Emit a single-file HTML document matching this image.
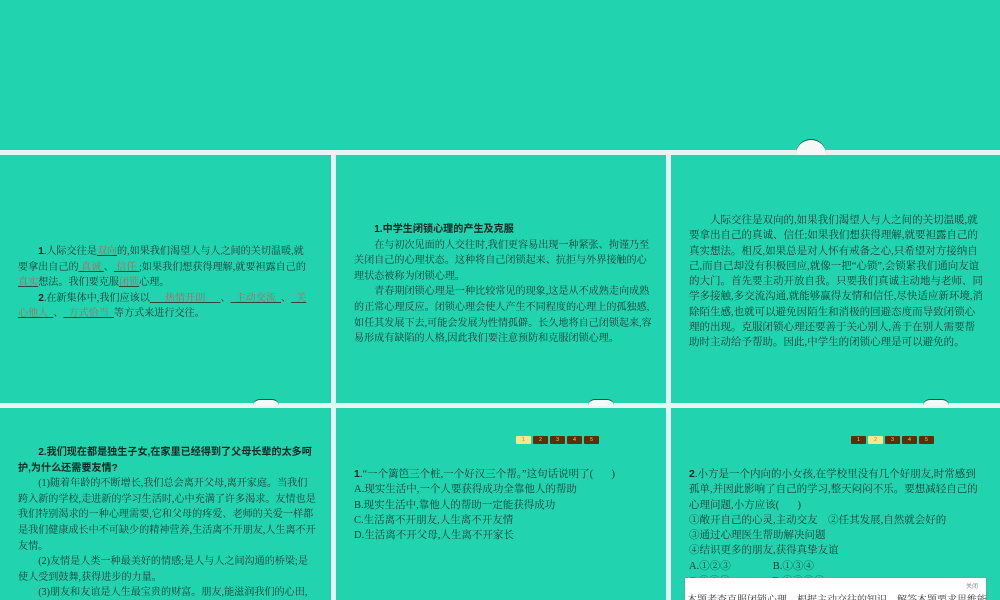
<!DOCTYPE html>
<html><head><meta charset="utf-8"><style>
body{margin:0;width:1000px;height:600px;overflow:hidden;background:#e8f4f1;position:relative;font-family:"Liberation Serif","Noto Serif CJK SC",serif;}
.s{position:absolute;background:#22d3b0;overflow:hidden}
.t{position:absolute;font-size:10.5px;line-height:15.3px;color:#143a30;}
.t.k{font-size:10.1px;line-height:15.6px}
.t p{margin:0;text-indent:2em}
.t p.n{text-indent:0}
b{font-family:"Liberation Sans","Noto Sans CJK SC",sans-serif;font-weight:bold;color:#102820}
.u{color:#b0695a;text-decoration:underline;text-decoration-color:#2a4a40}
.bump{position:absolute;width:30px;height:16px;border-radius:15px 15px 0 0;background:#f4f8f6;border-top:1.5px solid #2a4a40}
.nav{position:absolute;display:flex;gap:2px}
.nav span{width:15px;height:8px;background:#5a3008;color:#f0d090;font-size:5px;text-align:center;line-height:8px;border-radius:1px;font-family:"Liberation Sans",sans-serif}
.nav span.a{background:#f5e88a;color:#888}
</style></head><body>
<div class="s" style="left:0;top:0;width:1000px;height:150px"></div>
<div class="bump" style="left:796px;top:139px"></div>
<div class="s" style="left:0;top:155px;width:331px;height:248px">
<div class="t k" style="left:18px;top:89px;width:292px">
<p><b>1</b>.人际交往是<span class="u">双向</span>的,如果我们渴望人与人之间的关切温暖,就要拿出自己的<span class="u">&nbsp;真诚&nbsp;</span>、<span class="u">&nbsp;信任&nbsp;</span>;如果我们想获得理解,就要袒露自己的<span class="u">真实</span>想法。我们要克服<span class="u">闭锁</span>心理。</p>
<p><b>2</b>.在新集体中,我们应该以<span class="u">&nbsp;&nbsp;&nbsp;&nbsp;&nbsp;&nbsp;热情开朗&nbsp;&nbsp;&nbsp;&nbsp;&nbsp;&nbsp;</span>、<span class="u">&nbsp;&nbsp;主动交流&nbsp;&nbsp;</span>、<span class="u">&nbsp;&nbsp;关心他人&nbsp;&nbsp;</span>、<span class="u">&nbsp;&nbsp;方式恰当&nbsp;&nbsp;</span>等方式来进行交往。</p>
</div></div>
<div class="s" style="left:336px;top:155px;width:330px;height:248px">
<div class="t k" style="left:18px;top:67px;width:300px">
<p><b>1.中学生闭锁心理的产生及克服</b></p>
<p>在与初次见面的人交往时,我们更容易出现一种紧张、拘谨乃至关闭自己的心理状态。这种将自己闭锁起来、抗拒与外界接触的心理状态被称为闭锁心理。</p>
<p>青春期闭锁心理是一种比较常见的现象,这是从不成熟走向成熟的正常心理反应。闭锁心理会使人产生不同程度的心理上的孤独感,如任其发展下去,可能会发展为性情孤僻。长久地将自己闭锁起来,容易形成有缺陷的人格,因此我们要注意预防和克服闭锁心理。</p>
</div></div>
<div class="s" style="left:671px;top:155px;width:329px;height:248px">
<div class="t" style="left:18px;top:58px;width:296px">
<p>人际交往是双向的,如果我们渴望人与人之间的关切温暖,就要拿出自己的真诚、信任;如果我们想获得理解,就要袒露自己的真实想法。相反,如果总是对人怀有戒备之心,只希望对方接纳自己,而自己却没有积极回应,就像一把“心锁”,会锁紧我们通向友谊的大门。首先要主动开放自我。只要我们真诚主动地与老师、同学多接触,多交流沟通,就能够赢得友情和信任,尽快适应新环境,消除陌生感,也就可以避免因陌生和消极的回避态度而导致闭锁心理的出现。克服闭锁心理还要善于关心别人,善于在别人需要帮助时主动给予帮助。因此,中学生的闭锁心理是可以避免的。</p>
</div></div>
<div class="bump" style="left:253px;top:399px;width:26px;height:6px"></div>
<div class="bump" style="left:588px;top:399px;width:26px;height:6px"></div>
<div class="bump" style="left:923px;top:399px;width:26px;height:6px"></div>
<div class="s" style="left:0;top:408px;width:331px;height:192px">
<div class="t k" style="left:18px;top:37px;width:298px">
<p><b>2.我们现在都是独生子女,在家里已经得到了父母长辈的太多呵护,为什么还需要友情?</b></p>
<p>(1)随着年龄的不断增长,我们总会离开父母,离开家庭。当我们跨入新的学校,走进新的学习生活时,心中充满了许多渴求。友情也是我们特别渴求的一种心理需要,它和父母的疼爱、老师的关爱一样都是我们健康成长中不可缺少的精神营养,生活离不开朋友,人生离不开友情。</p>
<p>(2)友情是人类一种最美好的情感;是人与人之间沟通的桥梁;是使人受到鼓舞,获得进步的力量。</p>
<p>(3)朋友和友谊是人生最宝贵的财富。朋友,能滋润我们的心田,</p>
</div></div>
<div class="s" style="left:336px;top:408px;width:330px;height:192px">
<div class="nav" style="left:180px;top:28px"><span class="a">1</span><span>2</span><span>3</span><span>4</span><span>5</span></div>
<div class="t" style="left:18px;top:59px;width:296px">
<p class="n"><b>1</b>.“一个篱笆三个桩,一个好汉三个帮。”这句话说明了(&nbsp;&nbsp;&nbsp;&nbsp;&nbsp;&nbsp;&nbsp;)</p>
<p class="n">A.现实生活中,一个人要获得成功全靠他人的帮助</p>
<p class="n">B.现实生活中,靠他人的帮助一定能获得成功</p>
<p class="n">C.生活离不开朋友,人生离不开友情</p>
<p class="n">D.生活离不开父母,人生离不开家长</p>
</div></div>
<div class="s" style="left:671px;top:408px;width:329px;height:192px">
<div class="nav" style="left:180px;top:28px"><span>1</span><span class="a">2</span><span>3</span><span>4</span><span>5</span></div>
<div class="t" style="left:18px;top:59px;width:296px">
<p class="n"><b>2</b>.小方是一个内向的小女孩,在学校里没有几个好朋友,时常感到孤单,并因此影响了自己的学习,整天闷闷不乐。要想减轻自己的心理问题,小方应该(&nbsp;&nbsp;&nbsp;&nbsp;&nbsp;&nbsp;&nbsp;)</p>
<p class="n">①敞开自己的心灵,主动交友　②任其发展,自然就会好的</p>
<p class="n">③通过心理医生帮助解决问题</p>
<p class="n">④结识更多的朋友,获得真挚友谊</p>
<p class="n">A.①②③　　　　B.①③④</p>
<p class="n">C.②③④　　　　D.①②③④</p>
</div>
<div style="position:absolute;left:14px;top:170px;width:301px;height:30px;background:#fff;box-shadow:0 0 2px #888">
<div style="position:absolute;right:8px;top:3px;font-size:6px;color:#888;font-family:'Liberation Sans','Noto Sans CJK SC',sans-serif">关闭</div>
<div style="position:absolute;left:2px;top:13px;font-size:10px;color:#333;white-space:nowrap">本题考查克服闭锁心理。根据主动交往的知识，解答本题要求思维能</div>
</div>
</div>
</body></html>
